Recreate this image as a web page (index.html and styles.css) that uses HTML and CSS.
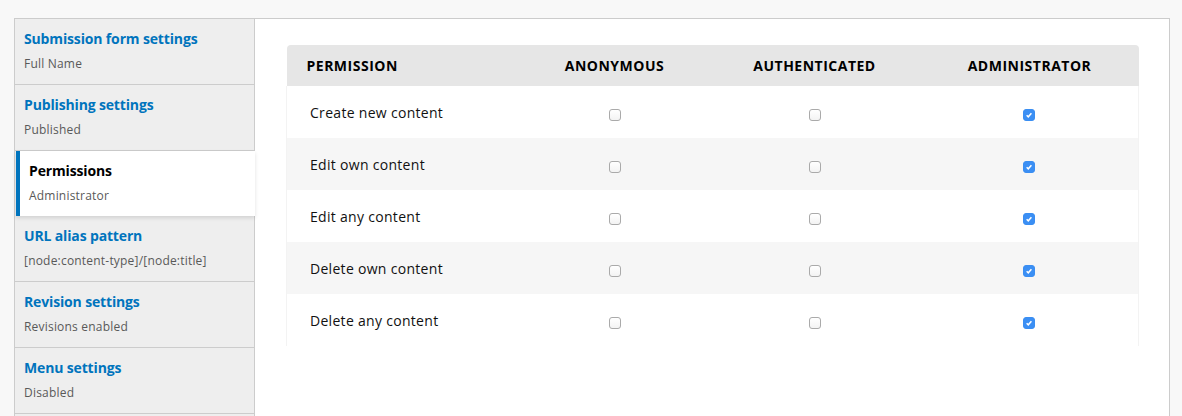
FILE: index.html
```html
<!DOCTYPE html>
<html lang="en">
<head>
    <meta charset="utf-8">
    <title>Content type settings</title>
    <link rel="stylesheet" href="styles.css">
</head>
<body>
    <div class="vtabs">
        <ul class="vtabs-menu">
            <li class="vtab">
                <a class="vtab-title">Submission form settings</a>
                <span class="vtab-summary">Full Name</span>
            </li>
            <li class="vtab">
                <a class="vtab-title">Publishing settings</a>
                <span class="vtab-summary">Published</span>
            </li>
            <li class="vtab active">
                <a class="vtab-title">Permissions</a>
                <span class="vtab-summary">Administrator</span>
            </li>
            <li class="vtab">
                <a class="vtab-title">URL alias pattern</a>
                <span class="vtab-summary">[node:content-type]/[node:title]</span>
            </li>
            <li class="vtab">
                <a class="vtab-title">Revision settings</a>
                <span class="vtab-summary">Revisions enabled</span>
            </li>
            <li class="vtab">
                <a class="vtab-title">Menu settings</a>
                <span class="vtab-summary">Disabled</span>
            </li>
            <li class="vtab"></li>
        </ul>
        <div class="vtabs-pane">
            <table class="perms">
                <thead>
                    <tr>
                        <th class="col-name">Permission</th>
                        <th class="col-anon">Anonymous</th>
                        <th class="col-auth">Authenticated</th>
                        <th class="col-admin">Administrator</th>
                    </tr>
                </thead>
                <tbody>
                    <tr>
                        <td>Create new content</td>
                        <td><span class="cb"></span></td>
                        <td><span class="cb"></span></td>
                        <td><span class="cb checked"><svg viewBox="0 0 12 12"><path d="M3.2 6.3 5.1 8.2 8.9 3.9"/></svg></span></td>
                    </tr>
                    <tr>
                        <td>Edit own content</td>
                        <td><span class="cb"></span></td>
                        <td><span class="cb"></span></td>
                        <td><span class="cb checked"><svg viewBox="0 0 12 12"><path d="M3.2 6.3 5.1 8.2 8.9 3.9"/></svg></span></td>
                    </tr>
                    <tr>
                        <td>Edit any content</td>
                        <td><span class="cb"></span></td>
                        <td><span class="cb"></span></td>
                        <td><span class="cb checked"><svg viewBox="0 0 12 12"><path d="M3.2 6.3 5.1 8.2 8.9 3.9"/></svg></span></td>
                    </tr>
                    <tr>
                        <td>Delete own content</td>
                        <td><span class="cb"></span></td>
                        <td><span class="cb"></span></td>
                        <td><span class="cb checked"><svg viewBox="0 0 12 12"><path d="M3.2 6.3 5.1 8.2 8.9 3.9"/></svg></span></td>
                    </tr>
                    <tr>
                        <td>Delete any content</td>
                        <td><span class="cb"></span></td>
                        <td><span class="cb"></span></td>
                        <td><span class="cb checked"><svg viewBox="0 0 12 12"><path d="M3.2 6.3 5.1 8.2 8.9 3.9"/></svg></span></td>
                    </tr>
                </tbody>
            </table>
        </div>
    </div>
</body>
</html>
```

FILE: styles.css
```css
* {
    margin: 0;
    padding: 0;
    box-sizing: border-box;
}
body {
    font-family: "Open Sans", Arial, sans-serif;
    font-size: 14px;
    color: #222;
    background-color: #f8f8f8;
    padding: 18px 12px 0 14px;
}
.vtabs {
    display: flex;
    border: 1px solid #ccc;
    background: white;
    min-height: 480px;
}
.vtabs-menu {
    list-style: none;
    width: 240px;
    flex-shrink: 0;
    background: #eee;
    border-right: 1px solid #ccc;
}
.vtab {
    display: flex;
    flex-direction: column;
    height: 66px;
    padding: 10px 12px 0 9px;
    border-bottom: 1px solid #ccc;
}
.vtab-title {
    font-weight: bold;
    font-size: 14px;
    line-height: 20px;
    letter-spacing: -0.15px;
    color: #0074bd;
}
.vtab-summary {
    margin-top: 6px;
    font-size: 12px;
    line-height: 18px;
    letter-spacing: 0.2px;
    color: #595959;
}
.vtab.active {
    position: relative;
    height: 65px;
    margin: 0 -1px 0 1px;
    background: white;
    border-left: 4px solid #0074bd;
    border-bottom: none;
    padding-left: 9px;
    box-shadow: 0 2px 4px rgba(0,0,0,0.12);
}
.vtab.active .vtab-title {
    color: #000;
}
.vtabs-pane {
    flex: 1;
    padding: 26px 30px 0 31px;
}
.perms {
    width: 852px;
    border-collapse: collapse;
    table-layout: fixed;
}
.perms th {
    height: 41px;
    background: #e6e6e6;
    font-size: 14px;
    font-weight: bold;
    letter-spacing: 0.5px;
    text-transform: uppercase;
    color: #000;
    text-align: center;
}
.perms th.col-name {
    text-align: left;
    padding-left: 20px;
    border-top-left-radius: 4px;
}
.perms th.col-admin {
    border-top-right-radius: 4px;
}
.col-name { width: 234px; }
.col-anon { width: 188px; }
.col-auth { width: 212px; }
.col-admin { width: 218px; }
.perms td {
    height: 52px;
    text-align: center;
    vertical-align: middle;
    padding-top: 2px;
}
.perms td:first-child {
    text-align: left;
    padding: 0 0 0 23px;
    letter-spacing: 0.3px;
    color: #111;
    border-left: 1px solid #f3f3f3;
}
.perms td:last-child {
    border-right: 1px solid #f3f3f3;
}
.perms tbody tr:nth-child(even) {
    background: #f6f6f6;
}
.cb {
    display: inline-block;
    width: 12px;
    height: 12px;
    border: 1px solid #aaa;
    border-radius: 3px;
    background: linear-gradient(#fff, #f3f3f3);
    vertical-align: middle;
}
.cb.checked {
    border-color: #3a8ef2;
    background: #3b8ff4;
}
.cb svg {
    display: block;
    width: 10px;
    height: 10px;
    fill: none;
    stroke: white;
    stroke-width: 1.8;
}
```
